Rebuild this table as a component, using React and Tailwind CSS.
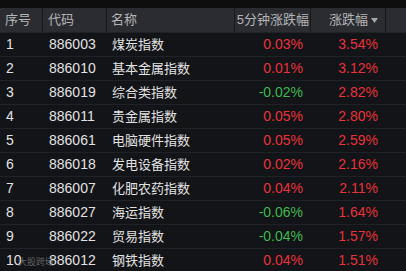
import React from 'react'

const rows = [
  ['1', '886003', '煤炭指数', '0.03%', '3.54%'],
  ['2', '886010', '基本金属指数', '0.01%', '3.12%'],
  ['3', '886019', '综合类指数', '-0.02%', '2.82%'],
  ['4', '886011', '贵金属指数', '0.05%', '2.80%'],
  ['5', '886061', '电脑硬件指数', '0.05%', '2.59%'],
  ['6', '886018', '发电设备指数', '0.02%', '2.16%'],
  ['7', '886007', '化肥农药指数', '0.04%', '2.11%'],
  ['8', '886027', '海运指数', '-0.06%', '1.64%'],
  ['9', '886022', '贸易指数', '-0.04%', '1.57%'],
  ['10', '886012', '钢铁指数', '0.04%', '1.51%'],
]

const grid = 'grid grid-cols-[43px_64px_128px_76px_75px_1fr]'

export default function App() {
  return (
    <div
      className="relative w-[406px] h-[271px] overflow-hidden bg-[#131417]"
      style={{ fontFamily: '"Liberation Sans", "Noto Sans CJK SC", sans-serif' }}
    >
      {/* top strip, previous content cut off */}
      <div className="h-[8px] bg-[#0e0e0f]" />

      {/* header */}
      <div className={`${grid} h-[24px] bg-[#2a2c31] text-[13px] text-[#b4b4b4] items-center`}>
        <div className="pl-[5px] border-r border-[#17181b] h-full flex items-center">序号</div>
        <div className="pl-[5px] border-r border-[#17181b] h-full flex items-center">代码</div>
        <div className="pl-[4px] border-r border-[#17181b] h-full flex items-center">名称</div>
        <div className="pr-[1px] border-r border-[#17181b] h-full flex items-center justify-end">5分钟涨跌幅</div>
        <div className="pr-[7px] border-r border-[#17181b] h-full flex items-center justify-end gap-[3px]">
          涨跌幅
          <svg width="7" height="5" viewBox="0 0 7 5" className="mt-[1px]">
            <polygon points="0,0 7,0 3.5,5" fill="#a8a8a8" />
          </svg>
        </div>
        <div />
      </div>

      {/* rows */}
      {rows.map(([n, code, name, m5, chg]) => (
        <div key={n} className={`${grid} h-[24px] items-center border-t border-[#202227] text-[14px]`}>
          <div className="pl-[6px] text-[#e2e2e2]">{n}</div>
          <div className="pl-[6px] text-[#e2e2e2]">{code}</div>
          <div className="pl-[5px] text-[13px] text-[#e2e2e2]">{name}</div>
          <div className={`pr-[8px] text-right ${m5.startsWith('-') ? 'text-[#3fb850]' : 'text-[#e8323c]'}`}>{m5}</div>
          <div className="pr-[8px] text-right text-[#e8323c]">{chg}</div>
          <div />
        </div>
      ))}

      {/* watermark */}
      <div className="absolute left-[18px] top-[256px] text-[9px] text-[#8a8a8a]/70">大股跨域</div>
    </div>
  )
}
